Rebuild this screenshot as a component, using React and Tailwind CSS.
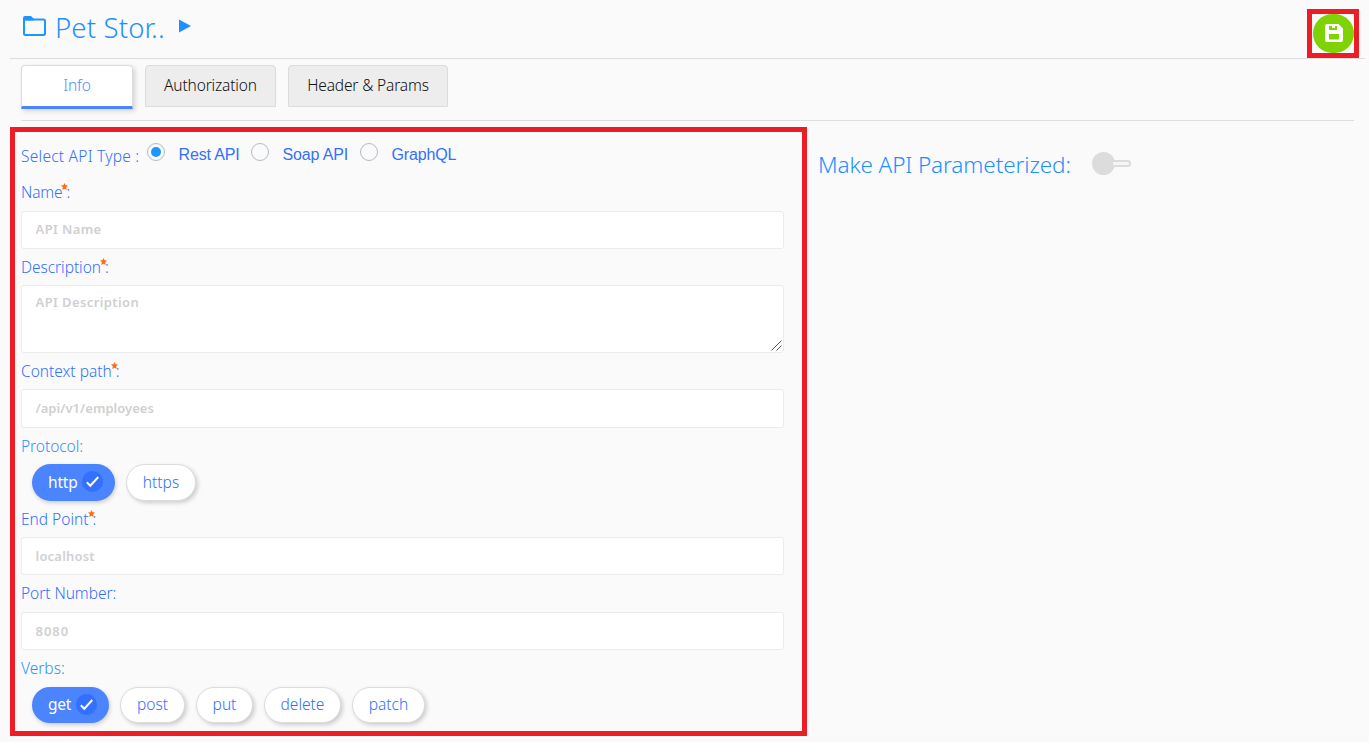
function Star() {
  return (
    <svg className="-ml-[1px] mt-[3px] h-[7px] w-[7px] shrink-0" viewBox="0 0 24 24" fill="#ff6a13">
      <path d="M12 0l3.6 7.8 8.4.9-6.3 5.8L19.500 24 12 19.300 4.500 24l1.800-9.500L0 8.700l8.400-.9z" />
    </svg>
  );
}

function Label({ children, required, light, tracking = "" }) {
  return (
    <div
      className={`flex items-start whitespace-pre text-[15.5px] leading-6 font-[350] ${tracking} ${
        light ? "text-[#2a93ff]" : "text-[#3370ff]"
      }`}
    >
      <span>{children}</span>
      {required && <Star />}
      {required && <span className="-ml-[2px]">:</span>}
    </div>
  );
}

function Radio({ label, checked, className }) {
  return (
    <label className={`flex items-start ${className}`}>
      <span className="mt-[3px] flex h-[18px] w-[18px] items-center justify-center rounded-full border border-[#b3bcc8] bg-[#fafafa]">
        {checked && <span className="h-[10px] w-[10px] rounded-full bg-[#1e96ff]" />}
      </span>
      <span className="ml-[13.5px] pt-[5px] font-['Liberation_Sans',sans-serif] text-base leading-5 tracking-[-0.15px] text-[#3370ff]">
        {label}
      </span>
    </label>
  );
}

function Field({ placeholder, className }) {
  return (
    <input
      placeholder={placeholder}
      className={`block w-full rounded-[3px] border border-[#ececec] bg-white px-[13.5px] text-[13px] font-semibold outline-none placeholder:text-[#d0d0d0] ${className}`}
    />
  );
}

function Chip({ label, active, className }) {
  if (active) {
    return (
      <button
        className={`flex items-center rounded-full bg-[#4a84ff] pl-4 text-[15.5px] leading-6 tracking-[-0.2px] text-white shadow-[1px_2px_4px_rgba(0,0,0,0.18)] ${className}`}
      >
        {label}
        <span className="ml-auto mr-3 flex h-[21px] w-[21px] items-center justify-center rounded-full bg-[#3370ff]">
          <svg className="h-[13px] w-[13px]" viewBox="0 0 13 13" fill="none" stroke="#fff" strokeWidth="2">
            <path d="M.8 7.300l3.500 3.400L12.300 2" />
          </svg>
        </span>
      </button>
    );
  }
  return (
    <button
      className={`flex items-center justify-center rounded-full border border-[#dcdcdc] bg-white text-[15.5px] leading-6 font-[350] text-[#3370ff] shadow-[2px_2px_4px_rgba(0,0,0,0.18)] ${className}`}
    >
      {label}
    </button>
  );
}

function Tab({ label, className }) {
  return (
    <button
      className={`flex items-start justify-center rounded-t-[4px] border pt-[7px] text-[15.5px] leading-6 font-light tracking-[-0.15px] ${className}`}
    >
      {label}
    </button>
  );
}

export default function App() {
  return (
    <div className="h-[749px] w-full overflow-hidden bg-white font-['Noto_Sans',sans-serif]">
      <div className="h-[742px] bg-[#fafafa]">
        <header className="ml-[10px] mr-1 flex h-[59px] items-start justify-between border-b border-[#dcdcdf]">
          <div className="flex items-start">
            <svg className="ml-[13px] mt-4 h-5 w-[23px]" viewBox="0 0 23 20" fill="none" stroke="#1e96ff" strokeWidth="2">
              <path d="M3 3.500h17.500a1.500 1.500 0 0 1 1.500 1.500v12.500a1.500 1.500 0 0 1-1.500 1.500H2.500A1.500 1.500 0 0 1 1 17.500V3" />
              <path d="M0 4.500V2a2 2 0 0 1 2-2h6l2.500 2.500V4.500z" fill="#1e96ff" stroke="none" />
            </svg>
            <h1 className="ml-2 mt-[10px] w-[110.5px] whitespace-nowrap pl-px text-[27.5px] leading-9 font-light tracking-[0.15px] text-[#1e90ff]">
              Pet Stor..
            </h1>
            <svg className="ml-[14px] mt-[19px] h-[14px] w-3" viewBox="0 0 12 14" fill="#1e90ff">
              <path d="M0 .5l12 6.500-12 6.500z" />
            </svg>
          </div>
          <div className="mr-[6px] mt-[9px] flex h-[49px] w-[52px] items-center justify-center border-[5px] border-[#ee1c25]">
            <button className="flex h-[39px] w-[41px] items-center justify-center rounded-full bg-[#7fd305]">
              <svg className="-mt-[2px] ml-[2px] h-[18px] w-[18px]" viewBox="0 0 18 18" fill="#fff" fillRule="evenodd">
                <path d="M2 0H13.500L18 4.500V16A2 2 0 0 1 16 18H2A2 2 0 0 1 0 16V2A2 2 0 0 1 2 0ZM4 2V6H12V2H10V4H7V2ZM4 10V15.500H14V10Z" />
              </svg>
            </button>
          </div>
        </header>

        <nav className="ml-[21px] mr-[15px] flex h-[62px] items-start gap-3 border-b border-[#dcdee2] pt-[6px]">
          <Tab
            label="Info"
            className="h-11 w-28 border-b-[3px] border-[#dcdcdc] border-b-[#4a84ff] bg-white text-[#4f90ff] shadow-[2px_2px_5px_rgba(0,0,0,0.16)]"
          />
          <Tab label="Authorization" className="h-[42px] w-[131px] border-[#dcdcdc] bg-[#ededed] text-[#111]" />
          <Tab label="Header & Params" className="h-[42px] w-40 border-[#dcdcdc] bg-[#ededed] text-[#111]" />
        </nav>

        <main className="flex items-start pl-[10px] pt-[6px]">
          <form className="h-[609px] w-[797px] border-[5px] border-[#ee1c25] pl-[6px] pr-[18px]">
            <div className="flex h-12 items-start pt-3">
              <div className="w-[126px]">
                <Label tracking="tracking-[0.25px]">Select API Type :</Label>
              </div>
              <Radio label="Rest API" checked className="-mt-[4px] w-[104px]" />
              <Radio label="Soap API" className="-mt-[4px] w-[109px]" />
              <Radio label="GraphQL" className="-mt-[4px]" />
            </div>

            <div className="h-[31px]">
              <Label required tracking="tracking-[-0.15px]">Name</Label>
            </div>
            <Field placeholder="API Name" className="h-[38px] pb-[2px] tracking-[0.4px]" />

            <div className="h-9 pt-[6px]">
              <Label required tracking="tracking-[-0.05px]">Description</Label>
            </div>
            <div className="relative">
              <textarea
                placeholder="API Description"
                className="block h-[68px] w-full resize-none rounded-[3px] border border-[#ececec] bg-white px-[13.5px] pt-[6px] text-[13px] leading-5 font-semibold tracking-[0.4px] outline-none placeholder:text-[#d0d0d0]"
              />
              <svg
                className="pointer-events-none absolute right-[2px] bottom-[2px] h-[11px] w-[11px]"
                viewBox="0 0 11 11"
                fill="none"
                stroke="#555"
              >
                <path d="M.5 10.500l10-10M5.500 10.500l5-5" />
              </svg>
            </div>

            <div className="h-9 pt-[6px]">
              <Label required>Context path</Label>
            </div>
            <Field placeholder="/api/v1/employees" className="h-[39px] pb-[2px] tracking-[0.03px]" />

            <div className="h-9 pt-[6px]">
              <Label light tracking="tracking-[-0.05px]">Protocol:</Label>
            </div>
            <div className="flex h-[37px] gap-[11px] pl-[11px]">
              <Chip active label="http" className="w-[83px] pb-[2px]" />
              <Chip label="https" className="w-[70px] pb-[2px]" />
            </div>

            <div className="h-9 pt-[6px]">
              <Label required>End Point</Label>
            </div>
            <Field placeholder="localhost" className="h-[38px] tracking-[0.2px]" />

            <div className="h-[37px] pt-[6px]">
              <Label tracking="tracking-[-0.05px]">Port Number:</Label>
            </div>
            <Field placeholder="8080" className="h-[38px] tracking-[1px]" />

            <div className="h-[37px] pt-[6px]">
              <Label light>Verbs:</Label>
            </div>
            <div className="flex h-9 gap-[11px] pl-[11px]">
              <Chip active label="get" className="w-[77px] pb-[2px]" />
              <Chip label="post" className="w-[65px] pb-[2px]" />
              <Chip label="put" className="w-[57px] pb-[2px]" />
              <Chip label="delete" className="w-[77px] pb-[2px]" />
              <Chip label="patch" className="w-[73px] pb-[2px]" />
            </div>
          </form>

          <section className="ml-[10px] flex items-start pt-[22px]">
            <h2 className="w-[275px] whitespace-nowrap pt-px pl-px text-[22.5px] leading-[30px] font-light tracking-[-0.1px] text-[#1e90ff]">
              Make API Parameterized:
            </h2>
            <div className="mt-[3px] flex items-center">
              <span className="h-[23px] w-[23px] rounded-full bg-[#dcdcdc]" />
              <span className="-ml-1 h-[7px] w-5 rounded-[3px] border-2 border-[#dcdcdc] bg-[#f5f5f5]" />
            </div>
          </section>
        </main>
      </div>
    </div>
  );
}
